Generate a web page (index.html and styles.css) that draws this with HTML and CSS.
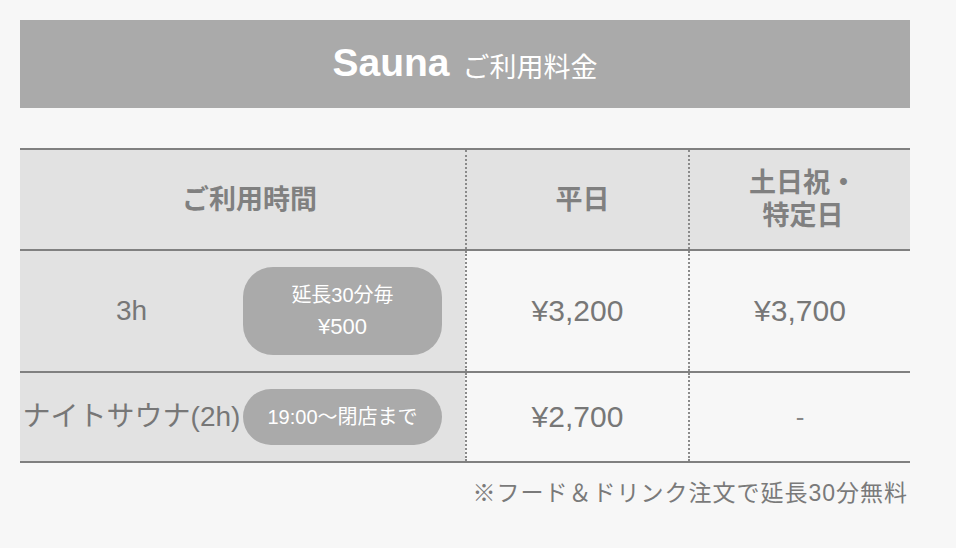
FILE: index.html
```html
<!DOCTYPE html>
<html lang="ja">
<head>
<meta charset="utf-8">
<title>Sauna ご利用料金</title>
<link rel="stylesheet" href="styles.css">
</head>
<body>
<div class="page">
  <div class="title-bar">
    <span class="title-en">Sauna</span><span class="title-ja">ご利用料金</span>
  </div>

  <div class="price-table">
    <div class="row row-head">
      <div class="cell cell-first head-cell head-a"><span class="head-text">ご利用時間</span></div>
      <div class="cell cell-col head-cell head-b"><span class="head-text">平日</span></div>
      <div class="cell cell-col head-cell head-c">
        <div class="head-stack">
          <span class="head-text head-line">土日祝・</span>
          <span class="head-text head-line">特定日</span>
        </div>
      </div>
    </div>
    <div class="row row-one">
      <div class="cell cell-first body-first">
        <span class="label">3h</span>
        <span class="pill pill-tall"><span class="pill-line">延長30分毎</span><span class="pill-line pill-yen">¥500</span></span>
      </div>
      <div class="cell cell-col"><span class="price">¥3,200</span></div>
      <div class="cell cell-col"><span class="price">¥3,700</span></div>
    </div>
    <div class="row row-two">
      <div class="cell cell-first body-first">
        <span class="label">ナイトサウナ(2h)</span>
        <span class="pill pill-short">19:00〜閉店まで</span>
      </div>
      <div class="cell cell-col"><span class="price">¥2,700</span></div>
      <div class="cell cell-col"><span class="price dash">-</span></div>
    </div>
  </div>

  <p class="note">※フード＆ドリンク注文で延長30分無料</p>
</div>
</body>
</html>
```
FILE: styles.css
```css
* {
  box-sizing: border-box;
}

html, body {
  margin: 0;
  padding: 0;
  background: #f7f7f7;
}

body {
  font-family: "Liberation Sans", "Noto Sans CJK JP", sans-serif;
  color: #7a7a7a;
  width: 956px;
  height: 548px;
  overflow: hidden;
}

.page {
  padding: 20px 0 0 20px;
  width: 930px;
}

.title-bar {
  width: 890px;
  height: 88px;
  background: #aaaaaa;
  color: #ffffff;
  display: flex;
  align-items: center;
  justify-content: center;
  padding-bottom: 4px;
}

.title-en {
  font-size: 39px;
  font-weight: bold;
  line-height: 1;
}

.title-ja {
  font-family: "Noto Sans CJK JP", sans-serif;
  font-size: 27px;
  line-height: 1;
  margin-left: 13px;
  margin-top: 6px;
}

.price-table {
  margin-top: 40px;
  width: 890px;
  border-top: 2px solid #808080;
}

.row {
  display: grid;
  grid-template-columns: 445px 223px 222px;
  border-bottom: 2px solid #808080;
}

.row-head {
  height: 101px;
  background: #e2e2e2;
}

.row-one {
  height: 122px;
}

.row-two {
  height: 90px;
}

.cell {
  display: flex;
  align-items: center;
  justify-content: center;
}

.cell-col {
  border-left: 2px dotted #8a8a8a;
}

.head-cell {
  padding-bottom: 5px;
}

.head-a {
  padding-left: 14px;
}

.head-b {
  padding-left: 10px;
}

.head-c {
  padding-left: 6px;
}

.head-stack {
  display: flex;
  flex-direction: column;
  align-items: center;
}

.head-text {
  font-family: "Noto Sans CJK JP", sans-serif;
  font-weight: bold;
  font-size: 27px;
  color: #808080;
  line-height: 33px;
  text-align: center;
}

.head-line {
  display: block;
  height: 33px;
}

.body-first {
  background: #e2e2e2;
  justify-content: flex-start;
  padding-right: 23px;
}

.label {
  flex: 1;
  text-align: center;
  font-size: 28px;
  line-height: 1;
  white-space: nowrap;
  color: #777777;
}

.pill {
  width: 199px;
  flex: none;
  background: #aaaaaa;
  color: #ffffff;
  font-size: 20px;
  text-align: center;
}

.pill-tall {
  height: 88px;
  border-radius: 30px;
  padding-top: 12px;
  display: flex;
  flex-direction: column;
  align-items: center;
}

.pill-line {
  display: block;
  height: 32px;
  line-height: 32px;
}

.pill-yen {
  font-size: 22px;
}

.pill-short {
  height: 56px;
  border-radius: 28px;
  line-height: 56px;
  white-space: nowrap;
}

.price {
  font-size: 30px;
  line-height: 1;
  color: #777777;
}

.dash {
  font-size: 26px;
  color: #888888;
}

.note {
  margin: 12px 0 0 0;
  width: 888px;
  text-align: right;
  font-size: 23px;
  letter-spacing: 1px;
  line-height: 36px;
  color: #7a7a7a;
}
```
